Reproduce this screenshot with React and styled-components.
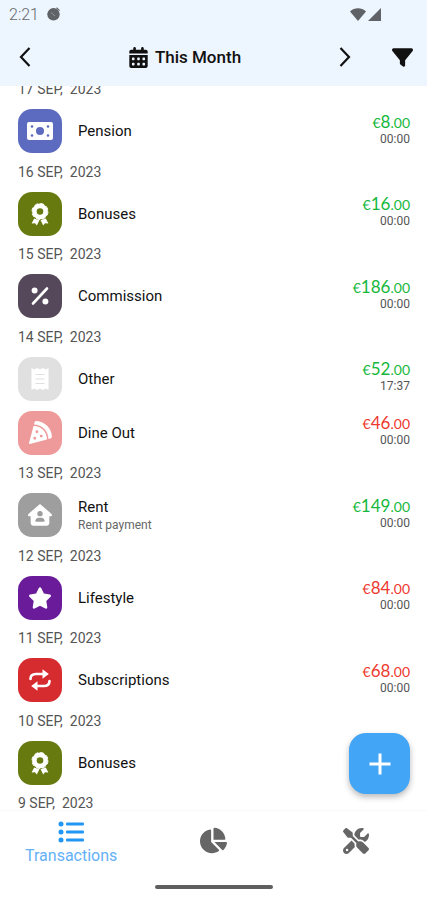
import React from "react";
import styled, { createGlobalStyle, css } from "styled-components";
import {
  FaCalendarDays,
  FaFilter,
  FaHouseUser,
  FaPizzaSlice,
  FaScrewdriverWrench,
  FaStar,
} from "react-icons/fa6";
import { FaChartPie } from "react-icons/fa";

const GlobalStyle = createGlobalStyle`
  * {
    box-sizing: border-box;
  }
  body {
    margin: 0;
    background-color: #fff;
    font-family: Roboto, "Liberation Sans", sans-serif;
  }
  button {
    border: none;
    padding: 0;
    background: none;
    color: inherit;
    font: inherit;
    cursor: pointer;
  }
`;

const Screen = styled.div`
  display: flex;
  flex-direction: column;
  height: 100vh;
  color: #111;
`;

const Header = styled.header`
  flex: none;
  background-color: #edf5fe;
`;
const StatusBar = styled.div`
  display: flex;
  align-items: center;
  gap: 8px;
  height: 28px;
  padding: 0 46px 0 9px;
  color: #66696d;
  font-size: 16px;
  font-weight: 300;
`;
const Signals = styled.div`
  display: flex;
  align-items: center;
  gap: 2px;
  margin-left: auto;
`;
const Toolbar = styled.div`
  display: grid;
  grid-template-columns: 50px 1fr 64px 50px;
  align-items: center;
  height: 58px;
`;
const IconButton = styled.button`
  display: flex;
  align-items: center;
  justify-content: center;
  height: 44px;
`;
const Period = styled.button`
  display: flex;
  align-items: center;
  justify-content: center;
  gap: 6px;
  padding-left: 6px;
  font-size: 17px;
  font-weight: 500;
`;

const Main = styled.main`
  position: relative;
  display: flex;
  flex: 1;
  min-height: 0;
  overflow: hidden;
`;
const Days = styled.div`
  display: flex;
  flex: 1;
  flex-direction: column;
  justify-content: space-between;
  margin: -10px 0 -8px;
`;
const Day = styled.section``;
const DayTitle = styled.h2`
  height: 28px;
  margin: 0;
  padding-left: 18px;
  color: #555;
  font-size: 14px;
  font-weight: 400;
  line-height: 26px;
  white-space: pre;
`;
const Row = styled.div`
  display: flex;
  align-items: center;
  height: 54px;
  padding: 0 17px 0 18px;
`;
const Tile = styled.div`
  display: flex;
  align-items: center;
  justify-content: center;
  width: 44px;
  height: 44px;
  margin-right: 16px;
  border-radius: 14px;
  background-color: ${(props) => props.$color};
  color: #fff;
`;
const Details = styled.div`
  flex: 1;
`;
const Name = styled.div`
  font-size: 15px;
  line-height: 20px;
`;
const Note = styled.div`
  color: #666;
  font-size: 12px;
  line-height: 16px;
`;
const Figures = styled.div`
  display: flex;
  flex-direction: column;
  align-items: flex-end;
  padding-bottom: 4px;
`;
const Amount = styled.div`
  color: ${(props) => (props.$type === "income" ? "#16b83c" : "#ee3a30")};
  font-family: Lato, "Liberation Sans", sans-serif;
  font-size: 17px;
  line-height: 18px;
`;
const Small = styled.span`
  font-size: 14px;
`;
const Time = styled.div`
  color: #555;
  font-size: 12px;
  line-height: 14px;
`;

const AddButton = styled.button`
  position: absolute;
  right: 17px;
  bottom: 16px;
  display: flex;
  align-items: center;
  justify-content: center;
  width: 61px;
  height: 61px;
  border-radius: 17px;
  background-color: #42a5f5;
  box-shadow: 0 3px 6px rgba(0, 0, 0, 0.28);
`;

const Nav = styled.nav`
  display: grid;
  grid-template-columns: repeat(3, 1fr);
  flex: none;
  height: 60px;
  border-top: 1px solid #f9f9f9;
`;
const NavItem = styled.button`
  display: flex;
  flex-direction: column;
  align-items: center;
  justify-content: center;
  gap: 4px;
  && {
    color: #666;
  }
  ${(props) =>
    props.$active &&
    css`
      && {
        padding-top: 4px;
        color: #2196f3;
      }
    `}
`;
const NavLabel = styled.span`
  color: #64b1f7;
  font-size: 16px;
  line-height: 18px;
`;
const HomeArea = styled.div`
  display: flex;
  flex: none;
  justify-content: center;
  height: 30px;
  padding-top: 15px;
`;
const HomeBar = styled.div`
  width: 118px;
  height: 4px;
  border-radius: 2px;
  background-color: #5f5f5f;
`;

const CashIcon = () => (
  <svg width="26" height="18" viewBox="0 0 26 18">
    <rect width="26" height="18" rx="2" fill="#fff" />
    <g fill="#5c6bc0">
      <circle cx="13" cy="9" r="4" />
      <circle cx="5" cy="4.5" r="1.3" />
      <circle cx="21" cy="4.5" r="1.3" />
      <circle cx="5" cy="13.5" r="1.3" />
      <circle cx="21" cy="13.5" r="1.3" />
    </g>
  </svg>
);

const AwardIcon = () => (
  <svg width="20" height="24" viewBox="0 0 20 24" fill="#fff">
    <path d="M4.2 16.6 L1.6 21.6 L5 21.2 L6.8 23.6 L9.4 18.2 Z" />
    <path d="M15.8 16.6 L18.4 21.6 L15 21.2 L13.2 23.6 L10.6 18.2 Z" />
    <circle
      cx="10"
      cy="9.5"
      r="5.6"
      fill="none"
      stroke="#fff"
      strokeWidth="4.6"
    />
    <circle
      cx="10"
      cy="9.5"
      r="8"
      fill="none"
      stroke="#fff"
      strokeWidth="1"
      strokeDasharray="4 2.3"
    />
  </svg>
);

const PercentIcon = () => (
  <svg width="20" height="20" viewBox="0 0 20 20" fill="#fff">
    <path
      d="M3 17.5 L17 2.5"
      stroke="#fff"
      strokeWidth="2.6"
      strokeLinecap="round"
    />
    <circle cx="4.6" cy="4.6" r="3" />
    <circle cx="15.4" cy="15.6" r="3" />
  </svg>
);

const ReceiptIcon = () => (
  <svg width="18" height="22" viewBox="0 0 18 22">
    <path
      d="M0.5 0 L3.3 1.5 L6.1 0 L9 1.5 L11.9 0 L14.7 1.5 L17.5 0 V22 L14.7 20.5 L11.9 22 L9 20.5 L6.1 22 L3.3 20.5 L0.5 22 Z"
      fill="#fff"
    />
    <path d="M4.5 6.5 H13.5 M4.5 11 H13.5 M4.5 15.5 H13.5" stroke="#e0e0e0" />
  </svg>
);

const RepeatIcon = () => (
  <svg width="24" height="24" viewBox="0 0 24 24" fill="#fff">
    <path
      d="M2.5 11 C2.5 7 4.5 6 8 6 H15 M21.5 13 C21.5 17 19.5 18 16 18 H9"
      fill="none"
      stroke="#fff"
      strokeWidth="2.6"
      strokeLinecap="round"
    />
    <path d="M14.5 1.2 L20.8 6 L14.5 10.8 Z" />
    <path d="M9.5 13.2 L3.2 18 L9.5 22.8 Z" />
  </svg>
);

const ListIcon = () => (
  <svg width="26" height="22" viewBox="0 0 26 22" fill="currentColor">
    <circle cx="3" cy="3" r="2.5" />
    <circle cx="3" cy="11" r="2.5" />
    <circle cx="3" cy="19" r="2.5" />
    <rect x="8" y="1.5" width="18" height="3" rx="1" />
    <rect x="8" y="9.5" width="18" height="3" rx="1" />
    <rect x="8" y="17.5" width="18" height="3" rx="1" />
  </svg>
);

const Chevron = ({ d }) => (
  <svg width="12" height="20" viewBox="0 0 12 20">
    <path d={d} fill="none" stroke="#111" strokeWidth="2.2" />
  </svg>
);

const days = [
  {
    date: "17 SEP,  2023",
    items: [
      { name: "Pension", color: "#5c6bc0", icon: <CashIcon />, amount: "8", type: "income" },
    ],
  },
  {
    date: "16 SEP,  2023",
    items: [
      { name: "Bonuses", color: "#667a0f", icon: <AwardIcon />, amount: "16", type: "income" },
    ],
  },
  {
    date: "15 SEP,  2023",
    items: [
      { name: "Commission", color: "#54485a", icon: <PercentIcon />, amount: "186", type: "income" },
    ],
  },
  {
    date: "14 SEP,  2023",
    items: [
      { name: "Other", color: "#e0e0e0", icon: <ReceiptIcon />, amount: "52", type: "income", time: "17:37" },
      { name: "Dine Out", color: "#ef9a9a", icon: <FaPizzaSlice size={23} />, amount: "46", type: "expense" },
    ],
  },
  {
    date: "13 SEP,  2023",
    items: [
      {
        name: "Rent",
        note: "Rent payment",
        color: "#9e9e9e",
        icon: <FaHouseUser size={24} />,
        amount: "149",
        type: "income",
      },
    ],
  },
  {
    date: "12 SEP,  2023",
    items: [
      { name: "Lifestyle", color: "#6a1b9a", icon: <FaStar size={24} />, amount: "84", type: "expense" },
    ],
  },
  {
    date: "11 SEP,  2023",
    items: [
      { name: "Subscriptions", color: "#d62b2f", icon: <RepeatIcon />, amount: "68", type: "expense" },
    ],
  },
  {
    date: "10 SEP,  2023",
    items: [{ name: "Bonuses", color: "#667a0f", icon: <AwardIcon /> }],
  },
  { date: "9 SEP,  2023", items: [] },
];

const Transaction = ({ item }) => (
  <Row>
    <Tile $color={item.color}>{item.icon}</Tile>
    <Details>
      <Name>{item.name}</Name>
      {item.note && <Note>{item.note}</Note>}
    </Details>
    {item.amount && (
      <Figures>
        <Amount $type={item.type}>
          <Small>€</Small>
          {item.amount}
          <Small>.00</Small>
        </Amount>
        <Time>{item.time || "00:00"}</Time>
      </Figures>
    )}
  </Row>
);

const App = () => {
  return (
    <Screen>
      <GlobalStyle />
      <Header>
        <StatusBar>
          2:21
          <svg width="13" height="14" viewBox="0 0 13 14">
            <circle cx="6.5" cy="7.3" r="6.2" fill="#5f6266" />
            <path d="M9.5 0.8 L12.6 3.6" stroke="#5f6266" strokeWidth="1.2" />
            <path d="M4 5.5 L8 9" stroke="#94989c" strokeWidth="1" />
          </svg>
          <Signals>
            <svg width="16" height="13" viewBox="0 0 16 13">
              <path d="M0 3.5 C4.5 -0.8 11.5 -0.8 16 3.5 L8 13 Z" fill="#5f6266" />
            </svg>
            <svg width="13" height="13" viewBox="0 0 13 13">
              <path d="M13 0 V13 H0 Z" fill="#5f6266" />
            </svg>
          </Signals>
        </StatusBar>
        <Toolbar>
          <IconButton aria-label="Previous month">
            <Chevron d="M10.5 1 L2 10 L10.5 19" />
          </IconButton>
          <Period>
            <FaCalendarDays size={21} />
            This Month
          </Period>
          <IconButton aria-label="Next month">
            <Chevron d="M1.5 1 L10 10 L1.5 19" />
          </IconButton>
          <IconButton aria-label="Filter">
            <FaFilter size={21} />
          </IconButton>
        </Toolbar>
      </Header>
      <Main>
        <Days>
          {days.map((day) => (
            <Day key={day.date}>
              <DayTitle>{day.date}</DayTitle>
              {day.items.map((item) => (
                <Transaction key={item.name} item={item} />
              ))}
            </Day>
          ))}
        </Days>
        <AddButton aria-label="Add transaction">
          <svg width="22" height="22" viewBox="0 0 22 22">
            <path d="M11 0.5 V21.5 M0.5 11 H21.5" stroke="#fff" strokeWidth="3" />
          </svg>
        </AddButton>
      </Main>
      <Nav>
        <NavItem $active>
          <ListIcon />
          <NavLabel>Transactions</NavLabel>
        </NavItem>
        <NavItem aria-label="Statistics">
          <FaChartPie size={27} />
        </NavItem>
        <NavItem aria-label="Settings">
          <FaScrewdriverWrench size={26} />
        </NavItem>
      </Nav>
      <HomeArea>
        <HomeBar />
      </HomeArea>
    </Screen>
  );
};

export default App;
